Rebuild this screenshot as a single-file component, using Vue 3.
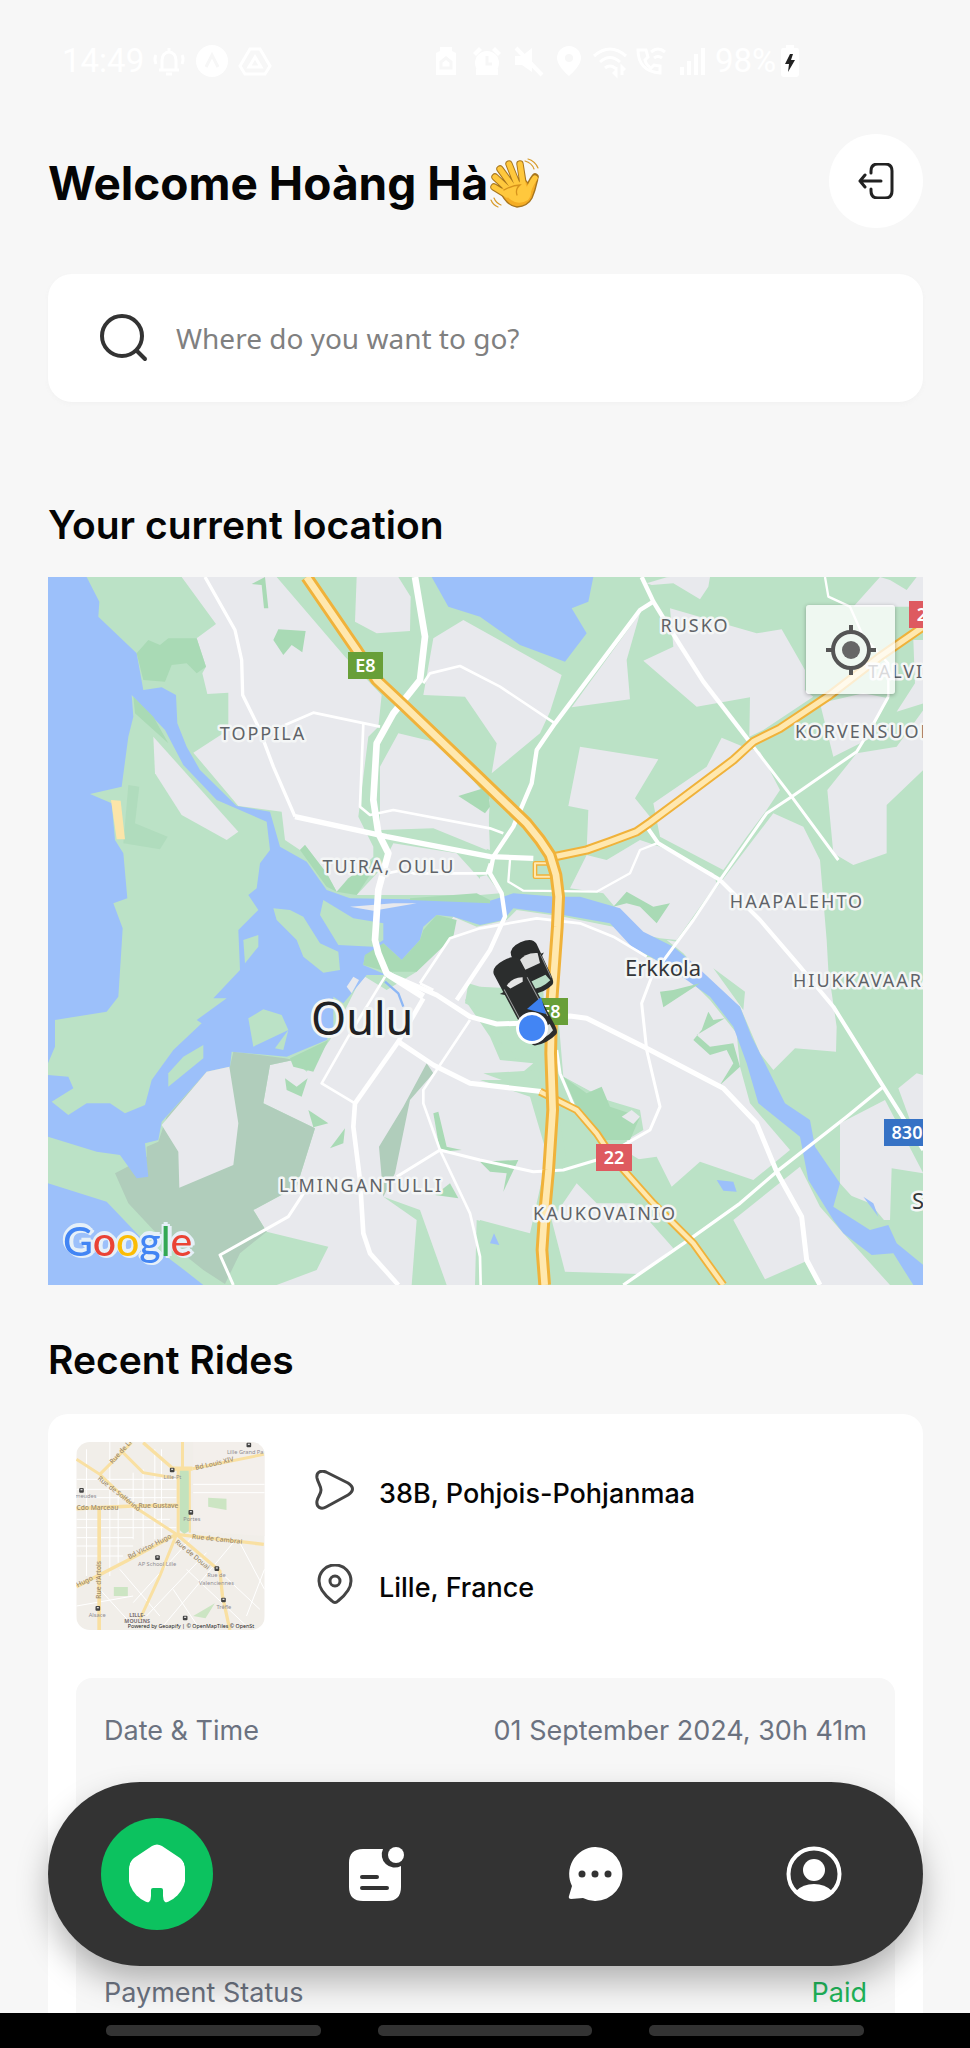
<script setup>
import { ref } from 'vue'

const destination = ref('')
const activeTab = ref('home')

/* Map geometry is drawn on a fine grid, three units to a map pixel. */
const blocks = [
  '425,21 710,21 915,260 1025,375 1015,470 985,500 955,740 1000,830 1000,860 890,965 860,910 795,825 780,840 735,810 725,725 595,708 460,548 565,480 565,368 502,372 487,310 498,290 470,205 528,162',
  '950,21 1075,21 1112,80 1110,183 1010,190 945,155',
  '1270,150 1565,315 1530,425 1500,490 1355,610 1370,520 1275,380 1150,375 1180,205',
  '1075,490 1200,520 1290,620 1350,690 1340,840 1180,775 1020,780 1020,590',
  '1060,820 1250,850 1350,960 1320,975 950,975 1020,900',
  '340,500 595,785 560,810 425,735 345,610',
  '1820,40 1880,22 1890,21 2010,21 2005,50 1980,88 1900,40 1835,45',
  '1890,115 2150,190 2225,178 2295,300 2295,360 2320,380 2170,480 2128,500 2130,382 1970,410 1810,272 1900,230',
  '1800,130 1760,270 1770,388 1595,412',
  '1620,530 1855,568 1785,685 1830,740 1790,770 1640,840 1645,720 1585,708',
  '2045,503 2110,530 2160,545 2220,660 2180,720 2120,800 2050,900 1860,800 1840,700 2000,590',
  '2340,400 2470,370 2545,385 2500,470 2500,500 2380,560',
  '2620,210 2650,210 2650,400 2570,425 2625,340',
  '2520,21 2550,30 2600,60 2630,21 2650,21 2650,110 2440,110',
  '2450,550 2570,530 2650,420 2650,600 2540,705 2540,850 2440,885 2380,850 2362,660',
  '2200,730 2290,770 2340,870 2360,1110 2365,1200 2390,1370 2388,1445 2265,1435 2200,1500 2160,1450 2100,1310 2020,1250 1930,1150 1880,1110 1910,1115 2040,940',
  '1640,855 1700,870 1800,810 1860,830 2020,910 2030,940 1910,1110 1860,1105 1790,1090 1690,970 1590,955',
  '1320,730 1345,720 1350,840 1320,830',
  '1320,920 1340,915 1380,970 1320,975',
  '1240,1040 1310,1070 1400,1050 1430,1020 1570,1040 1720,1070 1820,1160 1920,1190 1970,1250 2010,1290 2090,1390 2100,1490 2130,1600 2250,1740 2140,1830 1980,1775 1895,1850 1850,1760 1780,1770 1760,1710 1810,1680 1800,1620 1700,1590 1570,1520 1550,1280 1510,1290 1320,1250 1275,1290 1350,1400 1380,1470 1480,1480 1420,1530 1320,1530 1470,1580 1520,1750 1510,1810 1470,1990 1320,1950 1320,2145 710,2145 830,2100 865,2030 680,1985 640,1920 770,1850 825,1675 670,1600 690,1485 760,1470 800,1505 870,1410 950,1250 975,1220 1040,1260 1130,1205',
  '1535,1950 1610,1840 1670,1900 1780,1900 1900,2035 1800,2112 1575,2105',
  '2080,1950 2280,1790 2340,1910 2410,1990 2550,2145 2340,2145 2295,2075 2175,2128',
  '2400,1660 2535,1590 2650,1810 2555,1795 2550,1950 2500,1950 2400,1840',
  '2575,1555 2630,1510 2650,1515 2650,1650 2610,1650'
]

const parks = [
  '1320,1250 1510,1260 1515,1370 1380,1350 1275,1300 1285,1240',
  '1350,1390 1480,1360 1500,1420 1430,1470 1420,1450',
  '1330,1510 1500,1500 1490,1560 1440,1550',
  '1570,1520 1640,1560 1700,1590 1800,1630 1800,1680 1720,1720 1800,1770 1760,1830 1590,1830 1560,1650',
  '1030,1880 1140,1920 1220,2145 1115,2145 1130,1950',
  '1310,1950 1350,1960 1350,2145 1305,2145',
  '2020,1195 2115,1265 2110,1320 2060,1250',
  '2390,1860 2490,1900 2540,1960 2500,1980'
]

const groves = [
  '290,250 325,210 360,225 385,205 470,205 498,290 470,310 440,280 395,285 375,335 310,330',
  '280,380 340,440 385,520 285,430',
  '635,42 675,21 685,115 672,115 665,45',
  '715,178 797,183 787,247 755,225 730,255 700,210',
  '1255,678 1345,650 1350,710 1335,730',
  '890,965 925,925 1000,870 1000,900 950,975',
  '780,840 795,825 860,910 890,965 860,950',
  '1085,1170 1140,1110 1150,1080 1190,1035 1250,1050 1240,1100 1130,1205 1040,1205 970,1185 975,1155 1030,1120',
  '1110,985 1310,970 1350,990 1350,1000 1110,990',
  '750,1465 865,1410 820,1505 760,1490',
  '735,1525 770,1550 803,1525 785,1580 740,1560',
  '805,1620 865,1660 820,1672',
  '870,1735 915,1675 910,1720',
  '1180,1630 1195,1625 1220,1730 1265,1740 1200,1745',
  '1185,1875 1230,1840 1255,1885',
  '1720,1010 1760,965 1840,1010 1890,1000 1850,1060 1800,1010 1760,1000',
  '1860,1265 1900,1260 1980,1240 1870,1312',
  '1960,1410 1985,1380 2005,1325 2020,1350 2055,1345 1970,1395 2010,1430 2080,1420 2100,1490 2040,1545 2080,1480 2060,1440 2010,1455',
  '1570,1520 1640,1570 1685,1550 1710,1610 1800,1640 1770,1710 1690,1710 1610,1610',
  '1320,1775 1435,1770 1390,1865 1400,1810 1350,1805'
]

const lightGroves = ['265,645 298,650 285,760 383,800 360,838 250,820']

const heaths = [
  '580,1445 735,1465 760,1470 690,1485 670,1600 825,1675 770,1850 640,1920 680,1985 600,2050 555,2142 490,2100 340,1980 265,1900 225,1810 320,1760 320,1730 355,1715 380,1640 500,1505 570,1490',
  '1160,1480 1180,1510 1110,1590 1065,1810 1030,1880 1017,1730 1090,1610'
]

const waters = [
  '24,21 140,21 178,95 175,140 290,250 310,360 365,352 408,375 412,460 440,530 480,600 590,708 690,725 720,830 800,875 860,960 930,985 1350,992 1420,970 1550,980 1620,980 1740,1015 1810,1085 1900,1130 1960,1180 2100,1310 2135,1400 2190,1510 2235,1600 2310,1650 2325,1730 2400,1840 2380,1910 2490,1980 2545,1965 2570,2020 2650,2085 2650,2145 2620,2145 2560,2050 2495,2055 2410,1990 2380,1950 2305,1830 2280,1700 2155,1600 2120,1480 2080,1370 2010,1280 1940,1230 1840,1165 1775,1130 1710,1060 1570,1035 1420,1015 1390,1050 1320,1065 1240,1040 1190,1035 1150,1070 1140,1110 1085,1170 1030,1120 1020,1150 975,1155 970,1185 1040,1215 980,1215 910,1300 880,1280 880,1370 860,1410 740,1460 575,1445 570,1490 500,1505 365,1655 355,1710 315,1720 325,1820 290,1825 240,1755 170,1745 24,1700',
  '24,1840 200,1895 300,2000 420,2090 490,2145 24,2145',
  '1175,21 1660,21 1645,95 1595,115 1640,190 1575,275 1440,225 1320,140 1225,110',
  '2030,1830 2080,1835 2090,1865 2050,1862',
  '1350,2020 1362,1990 1378,2025',
  '2470,1880 2500,1900 2515,1940'
]

const islands = [
  '275,375 375,480 430,585 530,690 680,755 690,840 660,880 650,955 625,975 655,1020 595,1080 600,1200 520,1285 560,1285 470,1350 485,1360 400,1440 335,1530 315,1605 255,1630 210,1600 140,1600 85,1635 35,1595 100,1555 85,1520 24,1515 24,1480 45,1430 45,1350 200,1325 235,1280 245,1125 248,1075 220,1000 262,985 250,850 225,810 215,700 150,672 245,650 265,500 280,440',
  '610,1110 655,1095 655,1130 615,1180',
  '700,1015 750,1020 790,1040 840,1120 895,1145 900,1200 850,1208 790,1160 770,1110 710,1050',
  '625,1345 670,1318 725,1335 745,1380 640,1430',
  '705,1435 745,1380 730,1440',
  '490,1425 490,1465 385,1550 385,1510 430,1460',
  '850,990 940,1045 1030,1060 1030,1110 1000,1130 895,1125 840,1035'
]

const clearings = [
  '340,500 595,785 560,810 425,735 345,610',
  '365,1665 500,1505 568,1490 595,1660 580,1785 418,1853 415,1745',
  '930,1010 1060,1000 1130,1000 1000,1022',
  '920,1250 940,1220 957,1230 935,1270',
  '1745,1640 1775,1620 1800,1640 1780,1662'
]

const roads = [
  { w: 10, d: '495,21 585,180 605,270 608,375 655,470 700,590 765,740' },
  { w: 16, d: '765,740 1040,800 1350,860 1480,865' },
  { w: 20, d: '1125,21 1155,200 1140,330 1060,430 1010,520 1000,690 1015,790 1045,850 1015,960 1005,1110 1015,1150 1040,1210 1150,1280' },
  { w: 15, d: '1040,1210 1190,1275 1290,1340 1370,1362 1440,1360 1590,1338 1640,1345 1820,1435 2050,1555 2150,1660 2210,1805 2285,1940 2300,2070 2340,2145' },
  { w: 8, d: '735,465 820,428 1020,470' },
  { w: 8, d: '970,460 960,710 990,735 1060,720 1350,775 1390,790' },
  { w: 8, d: '1150,340 1170,310 1260,288 1380,350 1545,460' },
  { w: 13, d: '1805,21 1840,95 1920,225 1990,335 2125,510' },
  { w: 9, d: '2125,510 2255,680 2395,870' },
  { w: 13, d: '1840,95 1800,120 1545,460 1490,540 1475,640 1420,770 1360,860 1350,910 1385,970 1395,1040 1350,1140 1250,1290' },
  { w: 12, d: '1820,770 1855,820 2040,930 2160,1050 2280,1190 2380,1310 2530,1550 2650,1740' },
  { w: 9, d: '2545,380 2490,480 2450,545 2255,680 2180,730 2040,930 1960,1050 1835,1220 1805,1300 1820,1440 1860,1610 1830,1680 1760,1720 1670,1770 1570,1800 1480,1805 1320,1770 1200,1740 1070,1820' },
  { w: 7, d: '1410,870 1405,935 1450,962 1670,965 1770,910 1800,840 1850,820' },
  { w: 7, d: '2355,21 2365,80 2430,110 2470,200 2545,280 2545,380' },
  { w: 8, d: '1140,1240 1230,1105 1320,1075 1490,1045 1620,1060 1720,1100 1820,1160' },
  { w: 8, d: '1140,1240 1180,1260' },
  { w: 8, d: '1040,910 1090,900 1120,910 1340,910 1350,880' },
  { w: 15, d: '1075,1415 1180,1485 1290,1540 1510,1565' },
  { w: 10, d: '2530,1550 2420,1640 2210,1805 2100,1900 1960,2000 1750,2145' },
  { w: 9, d: '1550,1440 1560,1510 1600,1605' },
  { w: 14, d: '1150,1285 1075,1415 945,1600 940,1670 960,1830 970,1990 990,2050 1075,2145' },
  { w: 8, d: '1035,1220 925,1400 845,1540 945,1600' },
  { w: 8, d: '1290,1350 1150,1560 1150,1600 1200,1740 1290,1930 1320,2060 1322,2145' },
  { w: 9, d: '580,2145 540,2055 745,1940 810,1840' }
]

const highways = [
  { outer: 28, inner: 16, d: '1545,860 1640,840 1710,815 1790,785 1830,757 1920,690 2080,570 2140,515 2220,475 2370,375 2520,260 2650,170' },
  { outer: 24, inner: 13, d: '1500,1565 1560,1595 1610,1620 1670,1690 1720,1765 1840,1900 1960,2020 2050,2145' },
  { outer: 14, inner: 6, d: '1545,920 1485,920 1485,880 1530,880' },
  { outer: 38, inner: 20, d: '800,21 950,240 1010,330 1090,405 1320,625 1460,760 1500,810 1530,855 1548,915 1556,980 1552,1070 1536,1290 1532,1450 1538,1620 1526,1800 1512,1950 1506,2040 1514,2145' }
]

const districts = [
  { x: 215, y: 163, t: 'TOPPILA' },
  { x: 341, y: 296, t: 'TUIRA, OULU' },
  { x: 647, y: 55, t: 'RUSKO' },
  { x: 749, y: 331, t: 'HAAPALEHTO' },
  { x: 313, y: 615, t: 'LIMINGANTULLI' },
  { x: 557, y: 643, t: 'KAUKOVAINIO' }
]
const edgeDistricts = [
  { x: 820, y: 101, t: 'TALVI' },
  { x: 747, y: 161, t: 'KORVENSUORA' },
  { x: 745, y: 410, t: 'HIUKKAVAARA' }
]
const shields = [
  { x: 300, y: 75, w: 35, t: 'E8', c: '#689f38' },
  { x: 485, y: 421, w: 35, t: 'E8', c: '#689f38' },
  { x: 548, y: 567, w: 36, t: '22', c: '#de5a60' },
  { x: 861, y: 24, w: 36, t: '22', c: '#de5a60' },
  { x: 836, y: 542, w: 46, t: '830', c: '#3672c5' }
]

const streets = [
  { w: 9, d: 'M50 90 120 135 220 230 350 315' },
  { w: 9, d: 'M215 40 120 135' },
  { w: 9, d: 'M180 60 250 130 340 145' },
  { w: 10, d: 'M250 40 340 118' },
  { w: 9, d: 'M368 38V118' },
  { w: 13, d: 'M338 118H398' },
  { w: 9, d: 'M398 118 612 75' },
  { w: 9, d: 'M355 118V315' },
  { w: 6, d: 'M390 118V310' },
  { w: 11, d: 'M50 238 220 230 350 228' },
  { w: 10, d: 'M50 472 200 395 350 315' },
  { w: 10, d: 'M350 315 612 345' },
  { w: 10, d: 'M350 315 480 425 488 500 510 602' },
  { w: 9, d: 'M350 315 300 440 240 570' },
  { w: 11, d: 'M118 238V602' }
]
const streetNames = [
  { x: 158, y: 105, r: -48, t: 'Rue de Lille' },
  { x: 112, y: 150, r: 38, t: 'Rue de Solférino' },
  { x: 408, y: 122, r: -13, t: 'Bd Louis XIV' },
  { x: 50, y: 242, r: 0, t: 'Cdo Marceau' },
  { x: 236, y: 236, r: 0, t: 'Rue Gustave' },
  { x: 396, y: 328, r: 6, t: 'Rue de Cambrai' },
  { x: 208, y: 390, r: -27, t: 'Bd Victor Hugo' },
  { x: 345, y: 340, r: 40, t: 'Rue de Douai' },
  { x: 54, y: 474, r: -27, t: 'Hugo' },
  { x: 122, y: 508, r: -90, t: 'Rue d’Artois' }
]
const places = [
  { x: 556, y: 74, t: 'Lille Grand Pa' },
  { x: 338, y: 150, t: 'Lille-Pt' },
  { x: 78, y: 206, t: 'meudes' },
  { x: 396, y: 276, t: 'Portes' },
  { x: 292, y: 410, t: 'AP School Lille' },
  { x: 470, y: 444, t: 'Rue de' },
  { x: 470, y: 466, t: 'Valenciennes' },
  { x: 492, y: 540, t: 'Trêfle' },
  { x: 112, y: 562, t: 'Alsace' }
]
const stops = [
  [560, 40], [330, 115], [58, 176], [386, 242], [286, 378], [464, 411], [484, 505], [107, 530], [369, 559]
]
</script>

<template>
  <div class="screen">
    <header class="status" aria-label="Device status">
      <div class="status-left">
        <span>14:49</span>
        <svg class="s-icon" viewBox="0 0 36 36"><path d="M8 27h20M11 26V17a7 8 0 0 1 14 0v9M18 5v3M15 31h6M5 12q-2 4 0 9M31 12q2 4 0 9" /></svg>
        <svg class="s-icon solid" viewBox="0 0 36 36"><circle cx="18" cy="18" r="16" /><path class="cut" d="m12 24 6-12 6 12" /></svg>
        <svg class="s-icon" viewBox="0 0 36 36"><path d="M13 6h10l10 17-5 8H8L3 23zM18 14l-6 10h12z" /></svg>
      </div>
      <div class="status-right">
        <svg class="s-icon solid" viewBox="0 0 36 36"><path d="M12 8V4h12v4l4 2v22H8V10z" /><path class="cut" d="m13 19 5-4 5 4v6H13z" /></svg>
        <svg class="s-icon solid" viewBox="0 0 36 36"><circle cx="18" cy="20" r="12" /><path d="m4 10 6-6 3 3-6 6zM32 10l-6-6-3 3 6 6zM7 26h22v6H7z" /><path class="cut" d="M18 13v8h5" /></svg>
        <svg class="s-icon solid" viewBox="0 0 36 36"><path d="M5 13h7l10-8v24L12 22H5z" /><path class="line" d="m6 5 26 27" /></svg>
        <svg class="s-icon solid" viewBox="0 0 36 36"><path fill-rule="evenodd" d="M18 3a12 12 0 0 1 12 12c0 8-12 18-12 18S6 23 6 15A12 12 0 0 1 18 3zm0 8a4 4 0 1 0 0 8 4 4 0 0 0 0-8z" /></svg>
        <svg class="s-icon" viewBox="0 0 36 36"><path d="M2 13q16-14 32 0M8 19q10-9 20 0M13 25q5-4 10 0M24 24v8l-3-3M30 32v-8l3 3" /></svg>
        <svg class="s-icon" viewBox="0 0 36 36"><path d="M5 7c0 14 8 22 22 23v-7l-6-1-3 3q-5-3-6-8l3-3-2-7zM18 9q7-6 14 0M21 15q4-3 8 0" /></svg>
        <svg class="s-icon solid" viewBox="0 0 36 36"><path d="M6 24h4v8H6zM13 18h4v14h-4zM20 11h4v21h-4zM27 5h4v27h-4z" /></svg>
        <span>98%</span>
        <svg class="battery" viewBox="0 0 18 32"><path d="M5 0h8v3h3q2 0 2 3v23q0 3-3 3H3q-3 0-3-3V6q0-3 2-3h3z" fill="#fff" /><path d="M9 9 4 19h4l-1 8 7-12h-4l2-6z" fill="#222" /></svg>
      </div>
    </header>

    <main class="content">
      <div class="welcome">
        <h1>
          Welcome Hoàng Hà
          <svg class="wave" viewBox="0 0 50 50" role="img" aria-label="Waving hand">
            <g fill="none" stroke="#d79b2b" stroke-width="1.2" stroke-linecap="round">
              <path d="M35 3q7 2 9 8M38 1q7 2 10 9M4 40q2 5 7 7M1 42q2 5 7 7" />
            </g>
            <g stroke-linecap="round" fill="none">
              <path stroke="#a8761d" stroke-width="7.4" d="M20 33 5 19M23 29 10 11M27 26 19 6M33 25 30 6M17 37 4 29" />
              <path stroke="#a8761d" stroke-width="7.4" d="M38 33q3-9 7-14" />
              <path fill="#f5ad24" stroke="#a8761d" stroke-width="1.4" d="M9 31 34 21q4 3 5 7l5-11q5 2 3 7-2 9-5 16-4 8-15 9-11-1-18-18z" />
              <path stroke="#ffc83d" stroke-width="5.4" d="M20 33 5 19M23 29 10 11M27 26 19 6M33 26 30 6M17 37 4 29M38 34q3-9 7-14" />
              <path fill="#ffc83d" stroke="none" d="m13 32 20-9q4 4 5 10l3-3q1 7-3 12-6 4-13 2-8-3-12-12z" />
              <path stroke="#d7931c" stroke-width="1.3" d="M14 32q9-5 16-5-5 4-3 10" />
            </g>
          </svg>
        </h1>
        <button class="logout" type="button" aria-label="Sign out">
          <svg viewBox="0 0 36 36"><path d="M13 10V8q0-7 7-7h7q7 0 7 7v20q0 7-7 7h-7q-7 0-7-7v-2M23 18H2M7 12l-5 6 5 6" /></svg>
        </button>
      </div>

      <label class="search">
        <svg viewBox="0 0 48 48" aria-hidden="true"><circle cx="22" cy="22" r="20" /><path d="m37 37 8 8" /></svg>
        <input v-model="destination" type="text" placeholder="Where do you want to go?" aria-label="Destination" />
      </label>

      <h2 class="location-title">Your current location</h2>
      <section class="map" aria-label="Map of Oulu">
        <svg class="map-art" viewBox="0 0 875 708">
          <g transform="translate(-8 -7) scale(0.333333)">
            <rect x="24" y="21" width="2630" height="2130" fill="#bbe2c6" />
            <polygon v-for="p in blocks" :key="p" :points="p" fill="#e8e9ed" />
            <polygon v-for="p in parks" :key="p" :points="p" fill="#bbe2c6" />
            <polygon v-for="p in heaths" :key="p" :points="p" fill="#b0cdbb" />
            <polygon v-for="p in waters" :key="p" :points="p" fill="#9cc0fa" />
            <polygon v-for="p in islands" :key="p" :points="p" fill="#bbe2c6" />
            <polygon v-for="p in groves" :key="p" :points="p" fill="#a9dab5" />
            <polygon v-for="p in lightGroves" :key="p" :points="p" fill="#b0dcbd" />
            <polygon v-for="p in clearings" :key="p" :points="p" fill="#e8e9ed" />
            <polygon points="213,690 242,692 255,808 230,808" fill="#fbe5a9" />
            <g fill="none" stroke-linejoin="round">
              <polyline points="1035,1235 1075,1270 1090,1310" stroke="#8db7f5" stroke-width="7" />
              <polyline v-for="r in roads" :key="r.d" :points="r.d" :stroke-width="r.w" stroke="#fff" />
              <g v-for="h in highways" :key="h.d">
                <polyline :points="h.d" :stroke-width="h.outer" stroke="#f0b23a" />
                <polyline :points="h.d" :stroke-width="h.inner" stroke="#ffe8af" />
              </g>
            </g>
          </g>

          <g class="district" text-anchor="middle">
            <text v-for="l in districts" :key="l.t" :x="l.x" :y="l.y">{{ l.t }}</text>
          </g>
          <g class="district">
            <text v-for="l in edgeDistricts" :key="l.t" :x="l.x" :y="l.y">{{ l.t }}</text>
          </g>
          <text class="suburb" x="577" y="399">Erkkola</text>
          <text class="suburb" x="864" y="632">Sanginsuu</text>
          <text class="city" x="263" y="458">Oulu</text>
          <g v-for="s in shields" :key="s.t + s.x" class="shield">
            <rect :x="s.x" :y="s.y" :width="s.w" height="27" :fill="s.c" />
            <text :x="s.x + s.w / 2" :y="s.y + 20" text-anchor="middle">{{ s.t }}</text>
          </g>

          <g transform="translate(483 388) rotate(-25)">
            <path d="M-14-17q1-8 14-8t14 8v34q0 9-3 10-11 4-22 0-3-1-3-10z" fill="#292b2b" />
            <path d="M-11-8Q0-14 11-8L9 2H-9z" fill="#dedfdf" />
            <path d="M-9 15H9l2 7q-11 4-22 0z" fill="#b9dcc5" />
            <path d="M-13-6v26M13-6v26" stroke="#8d9090" fill="none" />
            <path d="M-17-6h4v3zM17-6h-4v3z" fill="#292b2b" />
          </g>
          <g transform="translate(477 424) rotate(-28)">
            <path d="M-15-38q1-8 15-8t15 8v72q0 9-3 10-12 4-24 0-3-1-3-10z" fill="#2b2d2d" />
            <path d="M-9-22Q0-27 9-22L7-18H-7z" fill="#e5e5e5" />
            <path d="M-11 32h22v7q-11 5-22 0z" fill="#dde2dd" />
            <path d="M-13-20v44M13-20v44" stroke="#9a9c9c" fill="none" />
            <path d="M-19-18h5v4zM19-18h-5v4z" fill="#2b2d2d" />
          </g>
          <path d="m479 432 14-12 5 17z" fill="#3c80ef" />
          <circle cx="484" cy="451" r="16" fill="#fff" />
          <circle cx="484" cy="451" r="13" fill="#4285f4" />

          <text class="brand" x="15" y="679"><tspan fill="#4285f4">G</tspan><tspan fill="#ea4335">o</tspan><tspan fill="#fbbc05">o</tspan><tspan fill="#4285f4">g</tspan><tspan fill="#34a853">l</tspan><tspan fill="#ea4335">e</tspan></text>
        </svg>
        <button class="locate" type="button" aria-label="Centre on my location">
          <svg viewBox="0 0 50 50"><circle cx="25" cy="25" r="18" /><path d="M25 0v8M25 42v8M0 25h8M42 25h8" /><circle class="dot" cx="25" cy="25" r="9" /></svg>
        </button>
      </section>

      <h2 class="rides-title">Recent Rides</h2>
      <article class="ride">
        <div class="route">
          <svg class="thumb" viewBox="50 38 564 564" role="img" aria-label="Route map">
            <rect x="50" y="38" width="564" height="564" fill="#f1eee9" />
            <path d="M400 38H614V320L400 305z" fill="#f3efeb" />
            <g stroke="#fff" stroke-width="3" fill="none">
              <path d="M50 180H350M50 205H350M50 270H330M50 295H350M50 325H220M50 350H220M50 380H190M50 150H350M150 38V440M175 200V400M220 130V330M250 120V350M285 60V330M305 60V330M80 60V440M400 165H614M400 190H614M220 520 400 320M260 560 440 370M310 590 520 340M120 480 220 590M50 530 220 500M380 420 560 590M430 380 600 540M540 340 614 480M340 480 420 600M560 560 614 420M180 420 300 560" />
            </g>
            <path d="M359 122h28l6 180-20 12-14-12z" fill="#c3e2bd" />
            <path d="m445 205 55 3v34l-55-10zM162 473h42v27h-42zM400 560l65-38-28 45z" fill="#cce5c3" />
            <g fill="none" stroke="#f9e0a2">
              <path v-for="s in streets" :key="s.d" :d="s.d" :stroke-width="s.w" />
            </g>
            <g class="street">
              <text v-for="s in streetNames" :key="s.t" :transform="`translate(${s.x} ${s.y}) rotate(${s.r})`">{{ s.t }}</text>
            </g>
            <g class="place">
              <text v-for="p in places" :key="p.t" :x="p.x" :y="p.y">{{ p.t }}</text>
            </g>
            <g v-for="s in stops" :key="s.join()">
              <rect :x="s[0]" :y="s[1]" width="14" height="14" rx="3" fill="#444" />
              <rect :x="s[0] + 4" :y="s[1] + 3" width="6" height="4" fill="#ddd" />
            </g>
            <text class="town" x="232" y="562">LILLE-</text>
            <text class="town" x="232" y="580">MOULINS</text>
            <text class="credit" x="204" y="597">Powered by Geoapify | © OpenMapTiles © OpenSt</text>
          </svg>
          <div class="stops">
            <div class="stop">
              <svg viewBox="0 0 40 40"><path d="M2 8C1 2 6 0 11 2L33 13q9 6 0 12L11 37C6 40 1 37 2 31 3 26 6 24 6 20S3 13 2 8z" /></svg>
              <span>38B, Pohjois-Pohjanmaa</span>
            </div>
            <div class="stop">
              <svg viewBox="0 0 40 40"><path d="M20 1C10 1 4 9 4 17c0 9 8 16 13 20q3 3 6 0c5-4 13-11 13-20C36 9 30 1 20 1z" /><circle cx="20" cy="17" r="5" /></svg>
              <span>Lille, France</span>
            </div>
          </div>
        </div>
        <dl class="details">
          <div><dt>Date &amp; Time</dt><dd>01 September 2024, 30h 41m</dd></div>
          <div><dt>Payment Status</dt><dd class="paid">Paid</dd></div>
        </dl>
      </article>
    </main>

    <nav class="tabs" aria-label="Main">
      <button type="button" aria-label="Home" :class="{ active: activeTab === 'home' }" @click="activeTab = 'home'">
        <svg viewBox="0 0 58 60"><path d="M24 2q5-3 10 0l18 12q5 4 5 11v24q0 11-10 11h-4q-8 0-8-8v-6q0-2-2-2h-8q-2 0-2 2v6q0 8-8 8h-4Q1 60 1 49V25q0-7 5-11z" /></svg>
      </button>
      <button type="button" aria-label="Rides" :class="{ active: activeTab === 'rides' }" @click="activeTab = 'rides'">
        <svg viewBox="0 0 56 56"><path d="M15 3h20a13 13 0 0 0 18 17v21q0 14-14 14H15Q1 55 1 41V17Q1 3 15 3z" /><circle cx="48" cy="9" r="8" /><path class="ink" d="M14 31h15M14 42h25" /></svg>
      </button>
      <button type="button" aria-label="Chat" :class="{ active: activeTab === 'chat' }" @click="activeTab = 'chat'">
        <svg viewBox="0 0 56 56"><path d="M28 1a27 27 0 1 1-12 51l-12 1q-3 0-2-3l3-10A27 27 0 0 1 28 1z" /><g fill="#333"><circle cx="15" cy="28" r="3.5" /><circle cx="28" cy="28" r="3.5" /><circle cx="41" cy="28" r="3.5" /></g></svg>
      </button>
      <button type="button" aria-label="Profile" :class="{ active: activeTab === 'profile' }" @click="activeTab = 'profile'">
        <svg viewBox="0 0 56 56"><circle cx="28" cy="28" r="25.5" fill="none" stroke="#fff" stroke-width="4" /><circle cx="28" cy="24" r="11" /><path d="M10 45q7-7 18-7t18 7q-7 9-18 9t-18-9z" /></svg>
      </button>
    </nav>

    <footer class="system"><i></i><i></i><i></i></footer>
  </div>
</template>

<style>
body {
  margin: 0;
  background: #f7f7f7;
}
</style>

<style scoped>
* {
  box-sizing: border-box;
}
.screen {
  display: flex;
  flex-direction: column;
  height: 100vh;
  overflow: hidden;
  background: #f7f7f7;
  color: #050505;
  font-family: Inter, "Noto Sans", sans-serif;
}
.status {
  flex: none;
  display: flex;
  align-items: center;
  height: 122px;
  padding: 0 62px;
  color: #fff;
  font: 400 33px/36px Roboto, sans-serif;
}
.status-left {
  display: flex;
  align-items: center;
  gap: 7px;
  width: 366px;
}
.status-right {
  display: flex;
  align-items: center;
  gap: 5px;
}
.s-icon {
  width: 36px;
  height: 36px;
  fill: none;
  stroke: #fff;
  stroke-width: 3;
}
.s-icon.solid {
  fill: #fff;
  stroke: none;
}
.s-icon .cut {
  fill: none;
  stroke: #f7f7f7;
  stroke-width: 3;
}
.s-icon .line {
  stroke: #fff;
  stroke-width: 4;
}
.battery {
  width: 18px;
  height: 32px;
}
.content {
  flex: 1;
  min-height: 0;
  overflow: hidden;
  padding: 12px 47px 0 48px;
}
.welcome {
  display: flex;
  align-items: center;
  justify-content: space-between;
}
h1,
h2 {
  margin: 0;
}
h1 {
  display: flex;
  align-items: center;
  gap: 2px;
  padding-top: 4px;
  font-size: 46px;
  font-weight: 700;
  line-height: 60px;
}
.wave {
  width: 50px;
  height: 50px;
}
.logout {
  display: grid;
  place-items: center;
  width: 94px;
  height: 94px;
  padding: 0;
  border: 0;
  border-radius: 50%;
  background: #fff;
}
.logout svg {
  width: 36px;
  height: 36px;
  fill: none;
  stroke: #222;
  stroke-width: 3;
  stroke-linecap: round;
  stroke-linejoin: round;
}
.search {
  display: flex;
  align-items: center;
  gap: 28px;
  height: 128px;
  margin-top: 46px;
  padding: 0 40px 0 52px;
  border-radius: 24px;
  background: #fff;
  box-shadow: 0 2px 4px #f2f2f2;
}
.search svg {
  flex: none;
  width: 48px;
  height: 48px;
  fill: none;
  stroke: #333;
  stroke-width: 4;
  stroke-linecap: round;
}
.search input {
  flex: 1;
  min-width: 0;
  padding: 0;
  border: 0;
  outline: 0;
  background: none;
  color: #333;
  font: 400 28px/44px "Noto Sans", sans-serif;
}
.search input::placeholder {
  color: #808080;
  opacity: 1;
}
h2 {
  font-size: 39px;
  font-weight: 600;
  line-height: 48px;
}
.location-title {
  margin-top: 99px;
}
.map {
  position: relative;
  margin-top: 28px;
}
.map-art {
  display: block;
  width: 100%;
  overflow: hidden;
}
.district,
.suburb,
.city {
  font-family: "Noto Sans", sans-serif;
  paint-order: stroke;
  stroke: #f4f6f6;
  stroke-linejoin: round;
}
.district {
  font-size: 18px;
  letter-spacing: 2px;
  stroke-width: 5px;
  fill: #5f6368;
}
.suburb {
  font-size: 22px;
  stroke-width: 5px;
  fill: #333639;
}
.city {
  font-size: 45px;
  stroke-width: 6px;
  fill: #202124;
}
.shield text {
  font: 600 18px "Noto Sans", sans-serif;
  fill: #fff;
}
.brand {
  font: 500 41px Lato, sans-serif;
  filter: drop-shadow(2px 2px 0 #e6f0f8) drop-shadow(-2px -2px 0 #e6f0f8) drop-shadow(2px -2px 0 #e6f0f8);
}
.locate {
  position: absolute;
  top: 28px;
  right: 28px;
  display: grid;
  place-items: center;
  width: 89px;
  height: 89px;
  padding: 0;
  border: 0;
  border-radius: 3px;
  background: rgba(255, 255, 255, 0.76);
  box-shadow: 0 1px 4px rgba(0, 0, 0, 0.3);
}
.locate svg {
  width: 50px;
  height: 50px;
  fill: none;
  stroke: #555;
  stroke-width: 4;
}
.locate .dot {
  fill: #666;
  stroke: none;
}
.rides-title {
  margin-top: 51px;
}
.ride {
  margin-top: 30px;
  padding: 28px;
  border-radius: 20px;
  background: #fff;
}
.route {
  display: flex;
  gap: 50px;
}
.thumb {
  flex: none;
  width: 189px;
  height: 188px;
  border-radius: 14px;
}
.street {
  font: 500 20px "Noto Sans", sans-serif;
  fill: #9b8a6d;
}
.place {
  font: 400 17px "Noto Sans", sans-serif;
  text-anchor: middle;
  fill: #8f8d92;
}
.town {
  font: 700 16px "Noto Sans", sans-serif;
  text-anchor: middle;
  fill: #7b7173;
}
.credit {
  font: 400 16px "Noto Sans", sans-serif;
  fill: #222;
}
.stops {
  display: flex;
  flex-direction: column;
  gap: 54px;
  padding-top: 28px;
}
.stop {
  display: flex;
  align-items: center;
  gap: 24px;
  height: 40px;
  font-size: 27px;
  font-weight: 500;
}
.stop span {
  padding-top: 6px;
}
.stop svg {
  width: 40px;
  height: 40px;
  fill: none;
  stroke: #444;
  stroke-width: 3;
  stroke-linejoin: round;
}
.details {
  display: grid;
  gap: 226px;
  margin: 48px 0 0;
  padding: 35px 28px;
  border-radius: 16px;
  background: #f7f7f7;
  color: #6b7280;
  font-size: 27px;
  line-height: 36px;
}
.details div {
  display: flex;
  justify-content: space-between;
}
.details dd {
  margin: 0;
}
.details .paid {
  color: #1fb65b;
}
.tabs {
  position: absolute;
  right: 47px;
  bottom: 82px;
  left: 48px;
  display: flex;
  height: 184px;
  border-radius: 92px;
  background: #333;
  box-shadow: 0 16px 32px rgba(0, 0, 0, 0.28);
}
.tabs button {
  flex: 1;
  display: grid;
  place-items: center;
  padding: 0;
  border: 0;
  background: none;
}
.tabs svg {
  width: 56px;
  height: 56px;
  fill: #fff;
}
.tabs .active svg {
  box-sizing: content-box;
  width: 58px;
  height: 60px;
  padding: 26px 27px;
  border-radius: 50%;
  background: #0cc25f;
}
.tabs .ink {
  fill: none;
  stroke: #333;
  stroke-width: 4;
  stroke-linecap: round;
}
.system {
  flex: none;
  display: flex;
  justify-content: space-between;
  gap: 57px;
  height: 35px;
  padding: 12px 106px;
  background: #000;
}
.system i {
  flex: 1;
  height: 11px;
  border-radius: 5px;
  background: #333;
}
</style>
